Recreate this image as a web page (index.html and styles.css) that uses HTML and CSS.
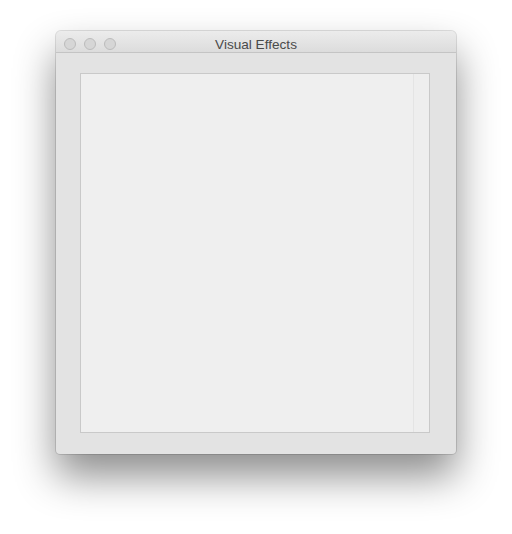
FILE: index.html
```html
<!DOCTYPE html>
<html>
<head>
<meta charset="utf-8">
<link rel="stylesheet" href="styles.css">
</head>
<body>
<div class="window">
  <div class="titlebar">
    <div class="lights">
      <span class="light"></span>
      <span class="light"></span>
      <span class="light"></span>
    </div>
    <div class="title">Visual Effects</div>
  </div>
  <div class="content">
    <div class="view">
      <div class="main"></div>
      <div class="scroller"></div>
    </div>
  </div>
</div>
</body>
</html>
```
FILE: styles.css
```css
html, body {
  margin: 0;
  padding: 0;
  background: #ffffff;
}
body {
  width: 512px;
  height: 534px;
  display: flex;
  justify-content: center;
  align-items: flex-start;
  padding-top: 31px;
  box-sizing: border-box;
  font-family: "Liberation Sans", Arial, sans-serif;
}
.window {
  width: 400px;
  height: 423px;
  background: #e3e3e3;
  border-radius: 5px 5px 4px 4px;
  box-shadow: 0 22px 40px rgba(0, 0, 0, 0.45), 0 0 0 1px rgba(0, 0, 0, 0.12);
  display: flex;
  flex-direction: column;
  overflow: hidden;
}
.titlebar {
  height: 21px;
  flex: none;
  background: linear-gradient(#ececec, #dcdcdc);
  border-bottom: 1px solid #c4c4c4;
  display: grid;
  grid-template-columns: 1fr;
  align-items: center;
}
.lights, .title {
  grid-row: 1;
  grid-column: 1;
}
.lights {
  display: flex;
  gap: 8px;
  padding-left: 8px;
  padding-top: 2px;
}
.light {
  width: 10px;
  height: 10px;
  border-radius: 50%;
  background: #d6d6d6;
  border: 1px solid #bcbcbc;
}
.title {
  text-align: center;
  font-size: 13.6px;
  color: #4a4a4a;
  line-height: 21px;
  padding-top: 3px;
}
.content {
  flex: 1;
  padding: 20px 26px 21px 24px;
  display: flex;
}
.view {
  flex: 1;
  border: 1px solid #c9c9c9;
  background: #efefef;
  display: flex;
}
.main {
  flex: 1;
}
.scroller {
  width: 15px;
  border-left: 1px solid #e4e4e4;
  background: #eeeeee;
}
```
